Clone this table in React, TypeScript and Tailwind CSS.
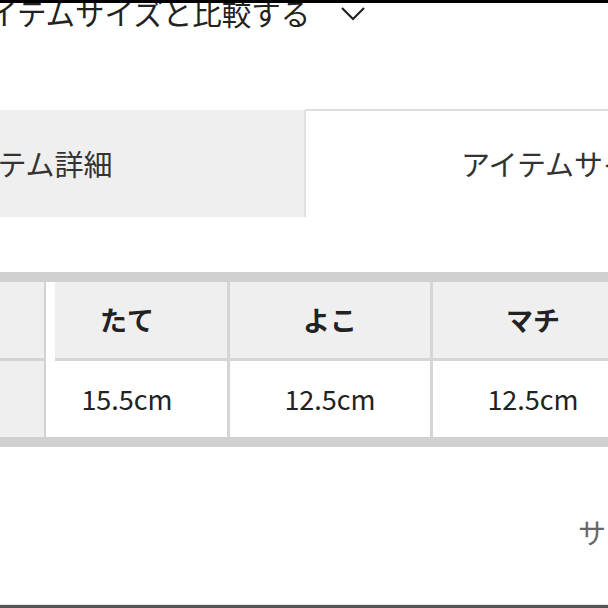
import React from "react";

const jp = { fontFamily: '"Noto Sans CJK JP", "Noto Sans", sans-serif' };

const Chevron = () => (
    <svg width="26" height="16" viewBox="0 0 26 16" fill="none" stroke="#222" strokeWidth="2.2">
        <path d="M2 2 L13 13 L24 2" />
    </svg>
);

type Row = { cells: string[]; head?: boolean };

const rows: Row[] = [
    { cells: ["たて", "よこ", "マチ"], head: true },
    { cells: ["15.5cm", "12.5cm", "12.5cm"] },
];

const TableRow: React.FC<{ row: Row }> = ({ row }) => {
    const cellBg = row.head ? "bg-[#efefef] font-bold" : "bg-white";
    return (
        <div className="flex h-[76px]">
            <div className="w-[46px] shrink-0 bg-[#efefef] border-r-2 border-[#d3d3d3]" />
            <div className="w-[9px] shrink-0 bg-white" />
            <div className={`w-[175px] shrink-0 flex items-center justify-center pr-[28px] border-r-[3px] border-[#d5d5d5] ${cellBg}`}>
                {row.cells[0]}
            </div>
            <div className={`w-[203px] shrink-0 flex items-center justify-center border-r-[3px] border-[#d5d5d5] ${cellBg}`}>
                {row.cells[1]}
            </div>
            <div className={`w-[200px] shrink-0 flex items-center justify-center ${cellBg}`}>
                {row.cells[2]}
            </div>
        </div>
    );
};

export default function App() {
    return (
        <div className="w-[608px] h-[608px] overflow-hidden bg-white border-t-[3px] border-black text-[#222] flex flex-col" style={jp}>
            {/* compare header */}
            <div className="h-[20px] flex items-center ml-[-40px] text-[29.5px] leading-none whitespace-nowrap">
                <span>アイテムサイズと比較する</span>
                <span className="ml-[30px] mt-[2px]"><Chevron /></span>
            </div>

            {/* tabs */}
            <div className="flex mt-[86px] h-[108px] text-[29px] text-[#333] whitespace-nowrap">
                <div className="w-[555px] ml-[-250px] shrink-0 bg-[#efefef] flex items-center justify-center border-r border-[#e2e2e2] mt-[1px]">
                    アイテム詳細
                </div>
                <div className="w-[400px] shrink-0 bg-white border-t-2 border-l border-[#dedede] flex items-center pl-[155px]">
                    アイテムサイズ
                </div>
            </div>

            {/* size table */}
            <div className="mt-[55px] border-y-[10px] border-[#d0d0d0] text-[27px] whitespace-nowrap">
                <TableRow row={rows[0]} />
                <div className="flex h-[3px]">
                    <div className="w-[46px] bg-[#d3d3d3]" />
                    <div className="w-[9px] bg-white" />
                    <div className="flex-1 bg-[#d5d5d5]" />
                </div>
                <TableRow row={rows[1]} />
            </div>

            {/* footer link */}
            <div className="mt-[70px] h-[30px] flex items-center pl-[578px] text-[28px] text-[#666] whitespace-nowrap">
                サイズについて
            </div>

            <div className="mt-auto h-[1px] bg-[#e5e5e5]" />
            <div className="h-[3px] bg-[#555]" />
        </div>
    );
}
